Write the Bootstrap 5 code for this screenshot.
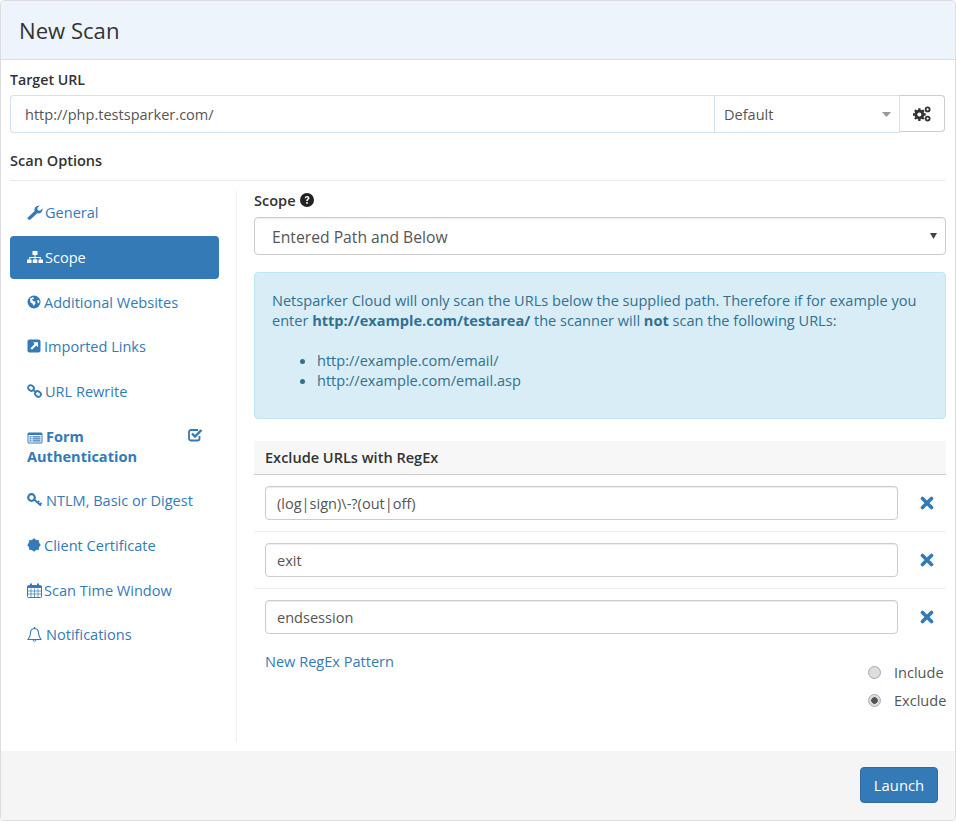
<!DOCTYPE html>
<html lang="en">
<head>
<meta charset="utf-8">
<title>New Scan</title>
<link href="https://cdn.jsdelivr.net/npm/bootstrap@5.3.0/dist/css/bootstrap.min.css" rel="stylesheet">
<style>
html,body{height:100%;}
body{margin:0;font-family:"Open Sans","Liberation Sans",sans-serif;font-size:14.55px;line-height:20px;color:#333;background:#fff;overflow:hidden;}
.scan-card{height:821px;border:1px solid #ddd;border-radius:4px;display:flex;flex-direction:column;--bs-card-border-color:#ddd;}
.scan-head{height:59px;flex:none;background:#edf4fb;border-bottom:1px solid #ddd;padding:0 18px;display:flex;align-items:center;font-size:22.1px;color:#333;border-radius:3px 3px 0 0;}
.scan-body{flex:1;padding:10px 9px 0;min-height:0;}
.fld-label{font-weight:600;color:#333;display:block;margin:0;line-height:20px;font-size:14.2px;}
.url-group{margin-top:5px;height:38px;width:935px;}
.url-input{height:38px;flex:1 1 auto;font-size:14.55px;color:#555;border:1px solid #d4e1ee;border-right:0;border-radius:4px 0 0 4px;padding:6px 14px;font-family:inherit;}
.prof-select{flex:none;width:186px;height:38px;font-size:14.55px;color:#555;border:1px solid #d4e1ee;border-radius:0;padding:5px 9px 6px;appearance:none;font-family:inherit;background:#fff url("data:image/svg+xml,%3Csvg xmlns='http://www.w3.org/2000/svg' width='9' height='5'%3E%3Cpath d='M0 0h9L4.5 5z' fill='%23999'/%3E%3C/svg%3E") no-repeat right 8px center;}
.gear-btn{flex:none;width:45px;height:37px;background:#fff;border:1px solid #ccc;border-left:0;border-radius:0 4px 4px 0;padding:0;display:flex;align-items:center;justify-content:center;}
.opt-title{margin-top:17px;padding-bottom:10px;border-bottom:1px solid #e9e9e9;height:31px;width:935px;font-weight:600;line-height:20px;}
.opt-wrap{display:flex;margin-top:10px;}
.side{width:227px;height:551px;flex:none;border-right:1px solid #eee;padding-right:17px;}
.side-link{display:flex;color:#337ab7;padding:11.2px 17px 11.8px;border-radius:4px;text-decoration:none;line-height:20px;margin-bottom:1.7px;}
.side-link.sel{background:#337ab7;color:#fff;}
.side-link svg{flex:none;margin-top:3px;margin-right:3px;}
.side-link svg.tight{margin-right:2px;}
.side-link svg.wide{margin-right:4px;}
.form-auth{font-weight:700;display:block;position:relative;padding-right:40px;}
.form-auth svg.chk{position:absolute;right:16px;top:14px;margin:0;}
.form-auth svg.ic{display:inline-block;vertical-align:-2px;margin:0 3px 0 0;}
.pane{margin-left:17px;width:692px;}
.scope-label{font-weight:600;display:flex;align-items:center;gap:4px;line-height:18px;padding-bottom:2px;}
.scope-select{margin-top:6px;height:38px;width:100%;font-size:15.7px;color:#555;border:1px solid #ccc;border-radius:4px;padding:2px 17px 0;appearance:none;font-family:inherit;box-shadow:inset 0 1px 1px rgba(0,0,0,.075);background:#fff url("data:image/svg+xml,%3Csvg xmlns='http://www.w3.org/2000/svg' width='7' height='6'%3E%3Cpath d='M0 0h7L3.5 6z' fill='%23444'/%3E%3C/svg%3E") no-repeat right 8px center;}
.note{margin:17px 0 0;height:147px;background:#d9edf7;border:1px solid #bce8f1;border-radius:4px;color:#31708f;padding:17px;}
.note p{margin:0 0 20px;}
.note ul{margin:0;padding-left:45px;}
.note b{font-weight:700;}
.rx-head{margin-top:22px;height:34px;background:#f7f7f7;border-bottom:1px solid #ccc;padding:6px 11px 7px;font-weight:600;}
.rx-row{display:flex;align-items:center;height:57px;border-bottom:1px solid #eee;padding:0 11px;}
.rx-row.last{border-bottom:0;height:62px;align-items:flex-start;padding-top:11px;}
.rx-input{width:633px;height:34px;font-size:14.55px;color:#555;border:1px solid #ccc;border-radius:4px;padding:6px 11px;font-family:inherit;box-shadow:inset 0 1px 1px rgba(0,0,0,.075);}
.rx-del{margin-left:22px;display:flex;}
.rx-del-top{margin-top:10px;}
.rx-new{color:#337ab7;text-decoration:none;display:block;margin:0 0 0 11px;}
.rx-choices{display:flex;flex-direction:column;align-items:flex-end;margin-top:-9px;gap:8px;}
.rx-opt{display:flex;align-items:center;gap:13px;width:78px;color:#555;margin:0;line-height:20px;}
.rx-opt input{appearance:none;width:13px;height:13px;border-radius:50%;border:1px solid #aaa;background:#ddd;margin:0;flex:none;}
.rx-opt input:checked{background:radial-gradient(circle,#555 0 3px,#ddd 3.6px);}
.scan-foot{height:69px;flex:none;background:#f5f5f5;display:flex;align-items:flex-start;justify-content:flex-end;padding:16px 17px 0 0;border-radius:0 0 3px 3px;}
.go-btn{width:78px;height:36px;background:#337ab7;border:1px solid #2e6da4;color:#fff;font-size:14.8px;padding:0;border-radius:4px;font-family:inherit;}
</style>
</head>
<body>
<div class="card scan-card">
  <div class="scan-head">New Scan</div>
  <div class="scan-body">
    <label class="fld-label">Target URL</label>
    <div class="d-flex url-group">
      <input class="url-input" type="text" value="http://php.testsparker.com/">
      <select class="prof-select"><option>Default</option></select>
      <button class="gear-btn" type="button" aria-label="Settings">
        <svg width="18" height="16" viewBox="0 0 17 15"><g fill="#333"><circle cx="6" cy="8" r="4.6"/><g stroke="#333" stroke-width="2.2"><path d="M6 2v12M0 8h12M1.8 3.8l8.4 8.4M10.200 3.800l-8.400 8.400"/></g><circle cx="6" cy="8" r="1.9" fill="#fff"/></g><g fill="none" stroke="#333" stroke-width="1.7"><circle cx="13.8" cy="3.2" r="1.9"/><circle cx="13.8" cy="11.8" r="1.9"/></g></svg>
      </button>
    </div>
    <div class="opt-title">Scan Options</div>
    <div class="opt-wrap">
      <nav class="side">
        <a class="side-link" href="#"><svg class="tight" width="16" height="15" viewBox="0 0 16 15"><path d="M1 14.500l-.6-1.600 7.200-7C7 3 8.500.5 12.800.4l-2.500 2.500.5 2.300 2.200.5L15.600 3.200c.1 4-2.500 5.800-5.300 5.100l-7.200 6.400z" fill="#337ab7"/></svg>General</a>
        <a class="side-link sel" href="#"><svg class="tight" width="16" height="14" viewBox="0 0 16 14"><g fill="#fff"><rect x="5.500" y="1" width="5" height="4"/><rect x="0" y="9.500" width="4.500" height="3.500"/><rect x="5.800" y="9.500" width="4.500" height="3.500"/><rect x="11.500" y="9.500" width="4.500" height="3.500"/><path d="M7.500 5h1v2h5.300v2.500h-1V8H8.500v1.500h-1V8H3.200v1.500h-1V7h5.300z"/></g></svg>Scope</a>
        <a class="side-link" href="#"><svg width="14" height="14" viewBox="0 0 14 14"><circle cx="7" cy="7" r="6.500" fill="#337ab7"/><path d="M3 3.500l3-1.500 1 1.500-2 1 1 1.500 2 .5.500 2-2 2.500-1-2.500-2-1zM10 5.500l2-.5.500 2.500-1.500 1z" fill="#fff"/></svg>Additional Websites</a>
        <a class="side-link" href="#"><svg width="14" height="14" viewBox="0 0 14 14"><rect x=".5" y=".5" width="13" height="13" rx="2" fill="#337ab7"/><path d="M6 3.200h5v5L9.300 6.500 5 10.800 3.400 9.200 7.700 4.900z" fill="#fff"/></svg>Imported Links</a>
        <a class="side-link" href="#"><svg width="15" height="14" viewBox="0 0 15 14"><g fill="none" stroke="#337ab7" stroke-width="1.800"><rect x="1" y="1.500" width="6" height="5" rx="2.400" transform="rotate(40 4 4)"/><rect x="8" y="7.500" width="6" height="5" rx="2.400" transform="rotate(40 11 10)"/><path d="M5.500 5.500l4 3"/></g></svg>URL Rewrite</a>
        <a class="side-link form-auth" href="#"><svg class="ic" width="16" height="12" viewBox="0 0 16 12"><rect x=".5" y=".5" width="15" height="11" rx="1.500" fill="#337ab7"/><rect x="1.500" y="3" width="13" height="7.500" fill="#fff"/><path d="M2.500 4.200h2v1.200h-2zM2.500 6.200h2v1.200h-2zM2.500 8.200h2v1.200h-2zM5.500 4.200h8v1.200h-8zM5.500 6.200h8v1.200h-8zM5.500 8.200h8v1.200h-8z" fill="#337ab7"/></svg>Form Authentication<svg class="chk" width="15" height="14" viewBox="0 0 15 14"><path d="M11.500 8v2.500a2 2 0 0 1-2 2H3a2 2 0 0 1-2-2V4a2 2 0 0 1 2-2h7" fill="none" stroke="#337ab7" stroke-width="1.800"/><path d="M4 5.500l3 3 6.500-6.500" fill="none" stroke="#337ab7" stroke-width="2.400"/></svg></a>
        <a class="side-link" href="#"><svg width="16" height="14" viewBox="0 0 16 14"><circle cx="4.500" cy="4.500" r="3.300" fill="none" stroke="#337ab7" stroke-width="2.200"/><path d="M7 6.500l7 6M10.500 9.500l1.800-1.500M12.800 11.500l1.800-1.500" fill="none" stroke="#337ab7" stroke-width="1.900"/></svg>NTLM, Basic or Digest</a>
        <a class="side-link" href="#"><svg width="14" height="14" viewBox="0 0 14 14"><g fill="#337ab7"><circle cx="7" cy="7" r="5.800"/><path d="M7 0l1.500 2h-3zM7 14l1.500-2h-3zM0 7l2 1.500v-3zM14 7l-2 1.500v-3zM2 2l2.500.5-2 2zM12 2l-2.500.5 2 2zM2 12l2.500-.5-2-2zM12 12l-2.500-.5 2-2z"/></g></svg>Client Certificate</a>
        <a class="side-link" href="#"><svg class="tight" width="15" height="15" viewBox="0 0 15 15"><rect x=".5" y="2.500" width="14" height="12" rx="1" fill="none" stroke="#337ab7"/><path d="M.5 3h14v2H.5zM3 .5h2v3.500H3zM10 .5h2v3.500h-2z" fill="#337ab7"/><path d="M.5 8h14M.5 11h14M4 5.500v9M7.500 5.500v9M11 5.500v9" stroke="#337ab7" stroke-width=".7"/></svg>Scan Time Window</a>
        <a class="side-link" href="#"><svg class="wide" width="15" height="15" viewBox="0 0 15 15"><path d="M7.500 1.500c-2.800 0-4 2-4 4.500 0 3-1 4.500-2.500 6.500h13c-1.500-2-2.500-3.500-2.500-6.500 0-2.500-1.200-4.500-4-4.500z" fill="none" stroke="#337ab7" stroke-width="1.100"/><path d="M6 13c0 1.500 3 1.500 3 0M7 .6h1v1H7z" fill="none" stroke="#337ab7"/></svg>Notifications</a>
      </nav>
      <div class="pane">
        <div class="scope-label">Scope <svg width="14" height="14" viewBox="0 0 14 14"><circle cx="7" cy="7" r="7" fill="#222"/><path d="M4.700 5.200C4.900 3.800 5.900 3.100 7.100 3.100c1.400 0 2.400.9 2.400 2 0 1.700-1.700 1.600-1.700 3H6.200c0-2.200 1.700-2.100 1.700-3.100 0-.5-.4-.8-.9-.8-.5 0-.8.300-.9 1zM6.200 9h1.600v1.700H6.200z" fill="#fff"/></svg></div>
        <select class="scope-select"><option>Entered Path and Below</option></select>
        <div class="note">
          <p>Netsparker Cloud will only scan the URLs below the supplied path. Therefore if for example you enter <b>http://example.com/testarea/</b> the scanner will <b>not</b> scan the following URLs:</p>
          <ul><li>http://example.com/email/</li><li>http://example.com/email.asp</li></ul>
        </div>
        <div class="rx-head">Exclude URLs with RegEx</div>
        <div class="rx-row"><input class="rx-input" type="text" value="(log|sign)\-?(out|off)"><span class="rx-del"><svg width="14" height="14" viewBox="0 0 14 14"><path d="M2.500 2.500l9 9M11.500 2.500l-9 9" stroke="#337ab7" stroke-width="3.600" stroke-linecap="round"/></svg></span></div>
        <div class="rx-row"><input class="rx-input" type="text" value="exit"><span class="rx-del"><svg width="14" height="14" viewBox="0 0 14 14"><path d="M2.500 2.500l9 9M11.500 2.500l-9 9" stroke="#337ab7" stroke-width="3.600" stroke-linecap="round"/></svg></span></div>
        <div class="rx-row last"><input class="rx-input" type="text" value="endsession"><span class="rx-del rx-del-top"><svg width="14" height="14" viewBox="0 0 14 14"><path d="M2.500 2.500l9 9M11.500 2.500l-9 9" stroke="#337ab7" stroke-width="3.600" stroke-linecap="round"/></svg></span></div>
        <a class="rx-new" href="#">New RegEx Pattern</a>
        <div class="rx-choices">
          <label class="rx-opt"><input type="radio" name="rx">Include</label>
          <label class="rx-opt"><input type="radio" name="rx" checked>Exclude</label>
        </div>
      </div>
    </div>
  </div>
  <div class="scan-foot"><button class="go-btn" type="button">Launch</button></div>
</div>
<script src="https://cdn.jsdelivr.net/npm/bootstrap@5.3.0/dist/js/bootstrap.bundle.min.js"></script>
</body>
</html>
